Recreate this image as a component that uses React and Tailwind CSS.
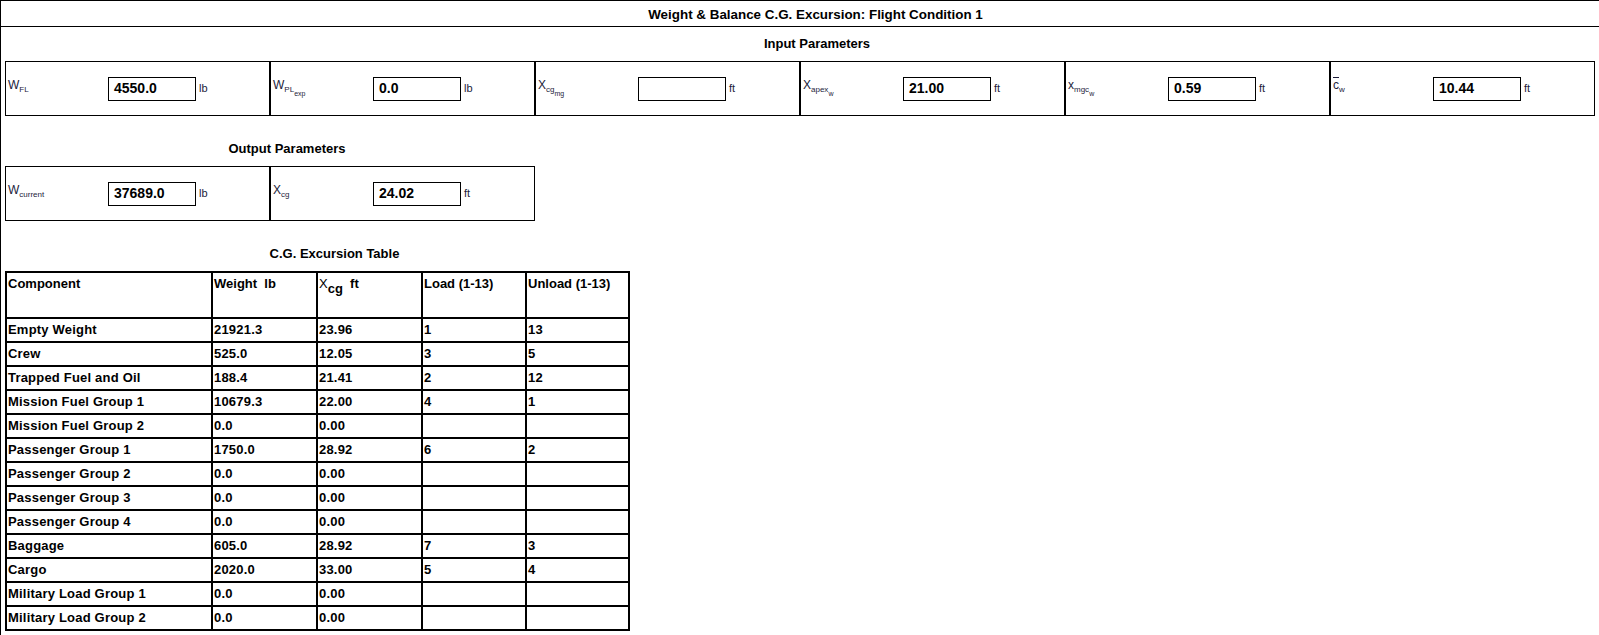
import React from "react";

const rows = [
  ["Empty Weight", "21921.3", "23.96", "1", "13"],
  ["Crew", "525.0", "12.05", "3", "5"],
  ["Trapped Fuel and Oil", "188.4", "21.41", "2", "12"],
  ["Mission Fuel Group 1", "10679.3", "22.00", "4", "1"],
  ["Mission Fuel Group 2", "0.0", "0.00", "", ""],
  ["Passenger Group 1", "1750.0", "28.92", "6", "2"],
  ["Passenger Group 2", "0.0", "0.00", "", ""],
  ["Passenger Group 3", "0.0", "0.00", "", ""],
  ["Passenger Group 4", "0.0", "0.00", "", ""],
  ["Baggage", "605.0", "28.92", "7", "3"],
  ["Cargo", "2020.0", "33.00", "5", "4"],
  ["Military Load Group 1", "0.0", "0.00", "", ""],
  ["Military Load Group 2", "0.0", "0.00", "", ""],
];

function ParamCell({ label, value, unit }) {
  return (
    <div className="w-[265px] h-[55px] border border-black flex items-center shrink-0">
      <div className="w-[102px] pl-[2px] -mt-[6px] text-[12px] leading-[12px] text-[#1c1c3a] whitespace-nowrap">
        {label}
      </div>
      <div className="w-[88px] h-[24px] border border-black flex items-center pl-[5px] text-[14px] font-bold text-black">
        {value}
      </div>
      <div className="ml-[3px] text-[11px] text-[#1c1c3a]">{unit}</div>
    </div>
  );
}

const S = ({ children }) => (
  <span className="relative top-[3px] text-[8px]">{children}</span>
);
const SS = ({ children }) => (
  <span className="relative top-[7px] text-[7px]">{children}</span>
);

const cols = ["w-[206px]", "w-[105px]", "w-[105px]", "w-[104px]", "w-[103px]"];

export default function App() {
  return (
    <div className="w-[1599px] h-[635px] overflow-hidden bg-white text-black font-['Liberation_Sans',Arial,sans-serif]">
      <div className="w-[1630px] h-[700px] border-l border-t border-black">
        <div className="h-[26px] border-b border-black pt-[6px] text-center text-[13.4px] font-bold leading-[16px]">
          Weight &amp; Balance C.G. Excursion: Flight Condition 1
        </div>

        <div className="pl-[4px]">
          <div className="w-[1590px] h-[34px] pt-[9px] pl-[34px] text-center text-[13px] font-bold leading-[16px]">
            Input Parameters
          </div>
          <div className="flex">
            <ParamCell label={<>W<S>FL</S></>} value="4550.0" unit="lb" />
            <ParamCell label={<>W<S>PL</S><SS>exp</SS></>} value="0.0" unit="lb" />
            <ParamCell label={<>X<S>cg</S><SS>mg</SS></>} value="" unit="ft" />
            <ParamCell label={<>X<S>apex</S><SS>w</SS></>} value="21.00" unit="ft" />
            <ParamCell label={<>x<S>mgc</S><SS>w</SS></>} value="0.59" unit="ft" />
            <ParamCell
              label={<><span className="overline">c</span><S>w</S></>}
              value="10.44"
              unit="ft"
            />
          </div>

          <div className="w-[530px] h-[50px] pt-[25px] pl-[34px] text-center text-[13px] font-bold leading-[16px]">
            Output Parameters
          </div>
          <div className="flex">
            <ParamCell label={<>W<S>current</S></>} value="37689.0" unit="lb" />
            <ParamCell label={<>X<S>cg</S></>} value="24.02" unit="ft" />
          </div>

          <div className="w-[625px] h-[50px] pt-[25px] pl-[34px] text-center text-[13px] font-bold leading-[16px]">
            C.G. Excursion Table
          </div>

          <div className="w-[625px] border-l-2 border-t-2 border-black text-[13px] font-bold">
            <div className="flex">
              <div className={`${cols[0]} h-[46px] border-r-2 border-b-2 border-black pl-[1px] pt-[3px] leading-[16px]`}>
                Component
              </div>
              <div className={`${cols[1]} h-[46px] border-r-2 border-b-2 border-black pl-[1px] pt-[3px] leading-[16px] whitespace-pre`}>
                {"Weight  lb"}
              </div>
              <div className={`${cols[2]} h-[46px] border-r-2 border-b-2 border-black pl-[1px] pt-[3px] leading-[16px] whitespace-pre`}>
                <span className="font-normal">X</span>
                <span className="relative top-[5px]">cg</span>
                {"  ft"}
              </div>
              <div className={`${cols[3]} h-[46px] border-r-2 border-b-2 border-black pl-[1px] pt-[3px] leading-[16px]`}>
                Load (1-13)
              </div>
              <div className={`${cols[4]} h-[46px] border-r-2 border-b-2 border-black pl-[1px] pt-[3px] leading-[16px]`}>
                Unload (1-13)
              </div>
            </div>
            {rows.map((r, i) => (
              <div key={i} className="flex">
                {r.map((c, j) => (
                  <div
                    key={j}
                    className={`${cols[j]} h-[24px] border-r-2 border-b-2 border-black pl-[1px] leading-[22px] whitespace-nowrap tracking-[0.2px]`}
                  >
                    {c}
                  </div>
                ))}
              </div>
            ))}
          </div>
        </div>
      </div>
    </div>
  );
}
